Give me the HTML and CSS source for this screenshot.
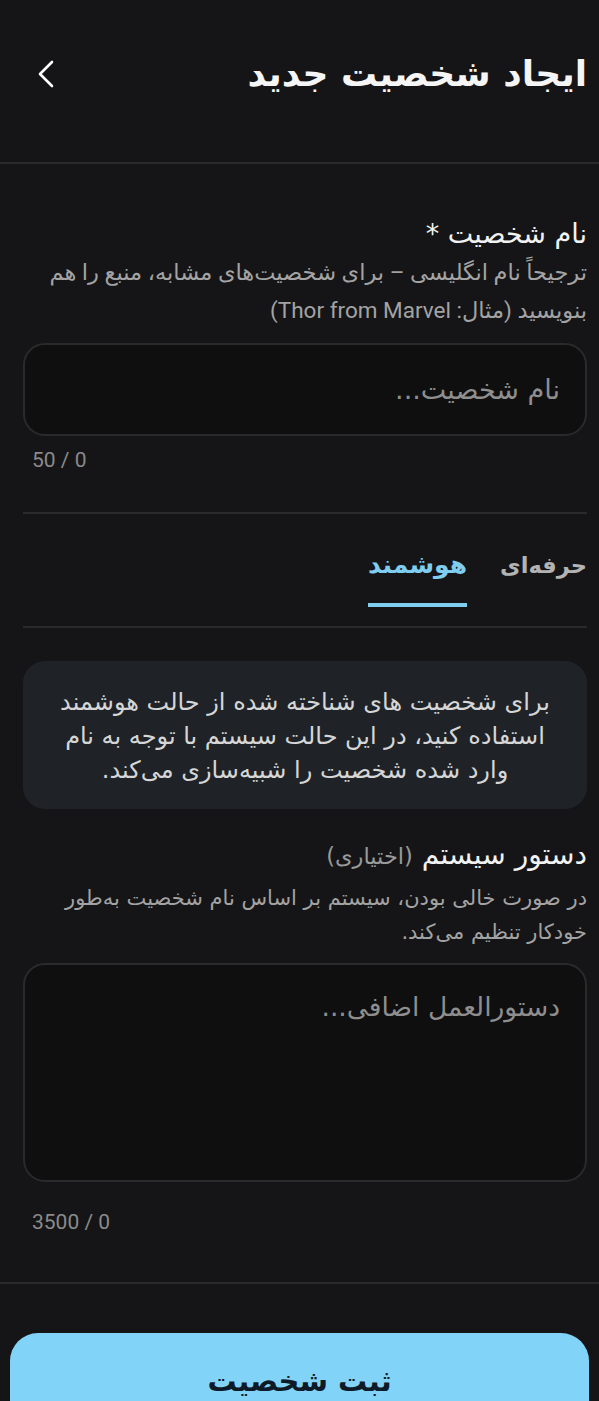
FILE: index.html
```html
<!DOCTYPE html>
<html lang="fa" dir="rtl">
<head>
<meta charset="utf-8">
<title>ایجاد شخصیت جدید</title>
<link rel="stylesheet" href="styles.css">
</head>
<body>
<header class="header">
  <h1 class="title">ایجاد شخصیت جدید</h1>
  <button class="back" aria-label="بازگشت">
    <svg width="18" height="30" viewBox="0 0 18 30"><polyline points="15,3 3,15 15,27" fill="none" stroke="#ffffff" stroke-width="2.6" stroke-linecap="round" stroke-linejoin="round"/></svg>
  </button>
</header>
<main class="main">
  <section class="field">
    <div class="label">نام شخصیت *</div>
    <div class="help help1">ترجیحاً نام انگلیسی – برای شخصیت‌های مشابه، منبع را هم بنویسید (مثال: Thor from Marvel)</div>
    <input class="input" type="text" placeholder="نام شخصیت...">
    <div class="counter" dir="ltr">50 / 0</div>
  </section>
  <nav class="tabs">
    <div class="tab">حرفه‌ای</div>
    <div class="tab active">هوشمند</div>
  </nav>
  <div class="info">برای شخصیت های شناخته شده از حالت هوشمند استفاده کنید، در این حالت سیستم با توجه به نام وارد شده شخصیت را شبیه‌سازی می‌کند.</div>
  <section class="field field2">
    <div class="label">دستور سیستم <span class="optional">(اختیاری)</span></div>
    <div class="help">در صورت خالی بودن، سیستم بر اساس نام شخصیت به‌طور خودکار تنظیم می‌کند.</div>
    <textarea class="textarea" placeholder="دستورالعمل اضافی..."></textarea>
    <div class="counter counter2" dir="ltr">3500 / 0</div>
  </section>
</main>
<footer class="footer">
  <button class="submit">ثبت شخصیت</button>
</footer>
</body>
</html>
```
FILE: styles.css
```css
* { box-sizing: border-box; }
html, body { margin: 0; padding: 0; }
body {
  background: #151517;
  color: #ffffff;
  font-family: "DejaVu Sans", "Noto Sans", sans-serif;
  width: 599px;
  overflow: hidden;
}
.header {
  display: flex;
  align-items: center;
  justify-content: space-between;
  height: 164px;
  padding: 0 12px 14px 34px;
  border-bottom: 2px solid #2a2a2c;
}
.title {
  margin: 0;
  font-size: 36px;
  font-weight: bold;
  line-height: 48px;
  color: #f5f5f5;
}
.back {
  background: none;
  border: 0;
  padding: 0;
  display: flex;
  width: 24px;
  justify-content: center;
}
.main {
  padding: 52px 12px 0 23px;
}
.label {
  font-size: 27px;
  line-height: 36px;
  height: 36px;
  color: #f2f2f2;
}
.field2 .label { font-size: 28px; }
.optional {
  font-size: 22.5px;
  color: #9a9a9a;
}
.help {
  font-size: 21px;
  line-height: 38px;
  color: #a3a3a3;
}
.help1 {
  font-family: Roboto, "DejaVu Sans", sans-serif;
  font-size: 22.5px;
  height: 76px;
  margin-top: 1px;
}
.input, .textarea {
  display: block;
  width: 100%;
  background: #0f0f10;
  border: 2px solid #2a2a2c;
  border-radius: 22px;
  color: #e0e0e0;
  font-family: "DejaVu Sans", sans-serif;
  font-size: 27px;
  padding: 0 25px;
  outline: none;
}
.input {
  height: 93px;
  margin-top: 14px;
}
.input::placeholder, .textarea::placeholder { color: #8e8e8e; }
.textarea {
  height: 219px;
  margin-top: 14px;
  padding-top: 24px;
  line-height: 36px;
  font-size: 26.5px;
  resize: none;
}
.counter {
  font-family: Roboto, "Liberation Sans", sans-serif;
  font-size: 21px;
  line-height: 24px;
  height: 24px;
  color: #8a8a8a;
  text-align: left;
  padding-left: 9px;
  margin-top: 12px;
}
.tabs {
  display: flex;
  gap: 33px;
  margin-top: 40px;
  border-top: 2px solid #2a2a2c;
  border-bottom: 2px solid #2a2a2c;
}
.tab {
  padding-top: 31px;
  font-size: 22.5px;
  font-weight: bold;
  line-height: 40px;
  color: #b3b3b3;
}
.tab.active {
  color: #7fcdef;
  font-size: 25px;
  height: 93px;
  padding-bottom: 18px;
  margin-bottom: 19px;
  border-bottom: 4px solid #7fcdef;
}
.info {
  margin-top: 33px;
  background: #1f2328;
  border-radius: 22px;
  padding: 24px 28px 22px;
  text-align: center;
  font-size: 24px;
  line-height: 34px;
  color: #d6d6d6;
}
.field2 { margin-top: 28px; }
.field2 .help { line-height: 34px; margin-top: 8px; }
.counter2 { margin-top: 28px; }
.footer {
  margin-top: 48px;
  border-top: 2px solid #2a2a2c;
  padding: 49px 10px 0 10px;
}
.submit {
  display: block;
  width: 100%;
  height: 96px;
  background: #81d4f7;
  border: 0;
  border-radius: 28px;
  color: #0e1a28;
  font-family: "DejaVu Sans", sans-serif;
  font-size: 29px;
  font-weight: bold;
}
```
